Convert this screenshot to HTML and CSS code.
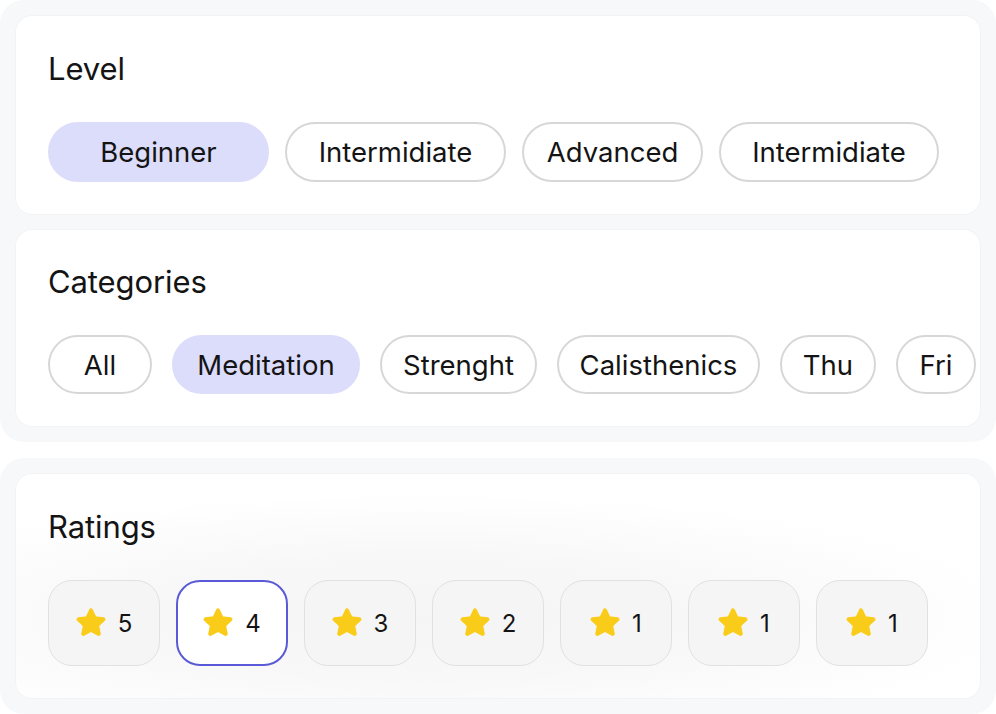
FILE: index.html
```html
<!DOCTYPE html>
<html lang="en">
<head>
<meta charset="utf-8">
<title>Filters</title>
<link rel="stylesheet" href="styles.css">
</head>
<body>
<div class="panel">
  <section class="card">
    <h2 class="card__title">Level</h2>
    <div class="chips chips--level">
      <button class="chip chip--active w-221">Beginner</button>
      <button class="chip w-221">Intermidiate</button>
      <button class="chip w-181">Advanced</button>
      <button class="chip w-220">Intermidiate</button>
    </div>
  </section>
  <section class="card card--tight">
    <h2 class="card__title">Categories</h2>
    <div class="chips chips--cat">
      <button class="chip w-104">All</button>
      <button class="chip chip--active w-188">Meditation</button>
      <button class="chip w-157">Strenght</button>
      <button class="chip w-203">Calisthenics</button>
      <button class="chip w-96">Thu</button>
      <button class="chip w-80">Fri</button>
    </div>
  </section>
</div>
<div class="panel">
  <section class="card card--soft">
    <h2 class="card__title">Ratings</h2>
    <div class="chips chips--rating">
      <button class="rate"><svg class="star" viewBox="0 0 24 24"><polygon points="12,3 14.7,8.7 20.8,9.4 16.3,13.6 17.5,19.7 12,16.7 6.5,19.7 7.7,13.6 3.2,9.4 9.3,8.7"/></svg><span>5</span></button>
      <button class="rate rate--active"><svg class="star" viewBox="0 0 24 24"><polygon points="12,3 14.7,8.7 20.8,9.4 16.3,13.6 17.5,19.7 12,16.7 6.5,19.7 7.7,13.6 3.2,9.4 9.3,8.7"/></svg><span>4</span></button>
      <button class="rate"><svg class="star" viewBox="0 0 24 24"><polygon points="12,3 14.7,8.7 20.8,9.4 16.3,13.6 17.5,19.7 12,16.7 6.5,19.7 7.7,13.6 3.2,9.4 9.3,8.7"/></svg><span>3</span></button>
      <button class="rate"><svg class="star" viewBox="0 0 24 24"><polygon points="12,3 14.7,8.7 20.8,9.4 16.3,13.6 17.5,19.7 12,16.7 6.5,19.7 7.7,13.6 3.2,9.4 9.3,8.7"/></svg><span>2</span></button>
      <button class="rate"><svg class="star" viewBox="0 0 24 24"><polygon points="12,3 14.7,8.7 20.8,9.4 16.3,13.6 17.5,19.7 12,16.7 6.5,19.7 7.7,13.6 3.2,9.4 9.3,8.7"/></svg><span>1</span></button>
      <button class="rate"><svg class="star" viewBox="0 0 24 24"><polygon points="12,3 14.7,8.7 20.8,9.4 16.3,13.6 17.5,19.7 12,16.7 6.5,19.7 7.7,13.6 3.2,9.4 9.3,8.7"/></svg><span>1</span></button>
      <button class="rate"><svg class="star" viewBox="0 0 24 24"><polygon points="12,3 14.7,8.7 20.8,9.4 16.3,13.6 17.5,19.7 12,16.7 6.5,19.7 7.7,13.6 3.2,9.4 9.3,8.7"/></svg><span>1</span></button>
    </div>
  </section>
</div>
</body>
</html>
```

FILE: styles.css
```css
* { box-sizing: border-box; }
html, body { margin: 0; padding: 0; background: #ffffff; }
body {
  font-family: Inter, "Noto Sans", sans-serif;
  color: #141414;
  width: 996px;
  height: 714px;
  overflow: hidden;
  display: flex;
  flex-direction: column;
  gap: 16px;
}
.panel {
  background: #f7f8fa;
  border-radius: 24px;
  padding: 16px;
  display: flex;
  flex-direction: column;
  gap: 16px;
}
.card {
  background: #ffffff;
  border-radius: 16px;
  padding: 32px;
  box-shadow: 0 0 0 1px rgba(0, 0, 0, 0.02);
  overflow: hidden;
}
.card--tight {
  padding-top: 31px;
}
.card--soft {
  background: radial-gradient(ellipse 62% 55% at 42% 64%, #f5f5f6 0%, #f8f8f9 50%, #ffffff 100%);
}
.card__title {
  margin: 0 0 32px;
  font-size: 31px;
  line-height: 42px;
  font-weight: 400;
  letter-spacing: -0.1px;
}
.chips {
  display: flex;
  flex-wrap: nowrap;
}
.chips--level { gap: 16px; }
.chips--cat { gap: 20px; }
.chips--rating { gap: 16px; }
.chip {
  flex-shrink: 0;
  height: 60px;
  border: 2px solid #d7d7d7;
  border-radius: 30px;
  background: #ffffff;
  font-family: inherit;
  font-size: 27.5px;
  color: #141414;
  display: flex;
  align-items: center;
  justify-content: center;
  padding: 0;
}
.chips--cat .chip { height: 59px; }
.chip--active {
  background: #dcdcfb;
  border-color: #dcdcfb;
}
.w-221 { width: 221px; }
.w-220 { width: 220px; }
.w-181 { width: 181px; }
.w-104 { width: 104px; }
.w-188 { width: 188px; }
.w-157 { width: 157px; }
.w-203 { width: 203px; }
.w-96 { width: 96px; }
.w-80 { width: 80px; }
.rate {
  flex-shrink: 0;
  width: 112px;
  height: 86px;
  border-radius: 24px;
  background: #f5f5f6;
  border: 1.5px solid #e1e1e2;
  display: flex;
  align-items: center;
  justify-content: center;
  gap: 12px;
  padding: 0;
  font-family: Inter, "Noto Sans", sans-serif;
  font-size: 24px;
  color: #141414;
}
.rate--active {
  background: #ffffff;
  border: 2px solid #5a5ad8;
}
.star {
  width: 34px;
  height: 34px;
  margin: 0 -2px;
  display: block;
}
.star polygon {
  fill: #facc1a;
  stroke: #facc1a;
  stroke-width: 2.8;
  stroke-linejoin: round;
}
```
